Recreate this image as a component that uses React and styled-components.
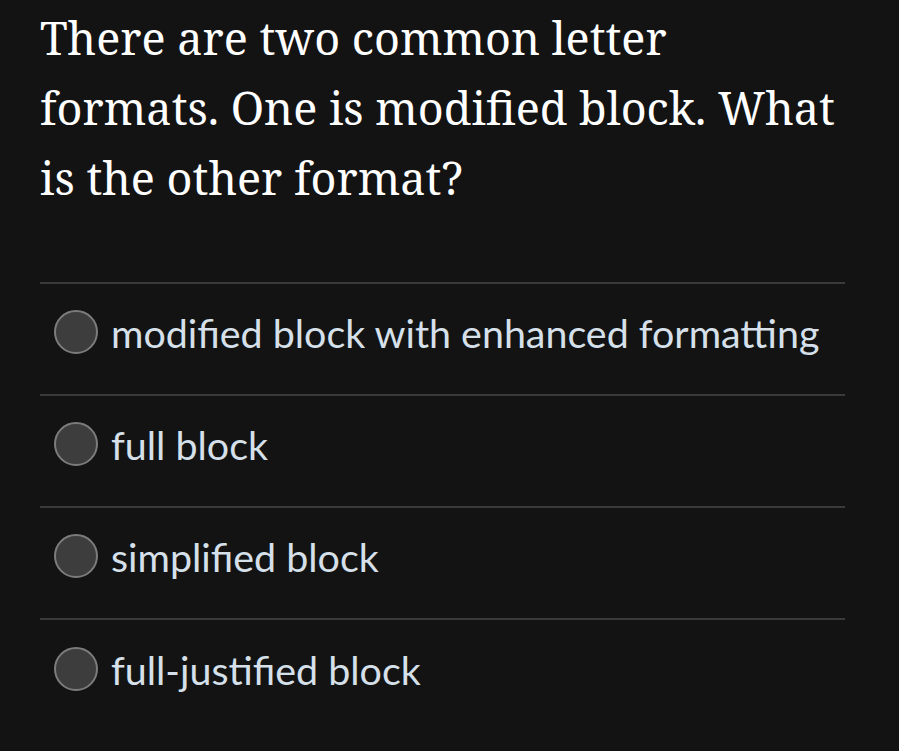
import styled, { createGlobalStyle } from 'styled-components';

const questionLines = [
  'There are two common letter',
  'formats. One is modified block. What',
  'is the other format?',
];

const options = [
  'modified block with enhanced formatting',
  'full block',
  'simplified block',
  'full-justified block',
];

function App() {
  return (
    <Page>
      <GlobalStyle />
      <Question>
        {questionLines.map((line) => (
          <Line key={line}>{line}</Line>
        ))}
      </Question>
      <Options>
        {options.map((text) => (
          <Option key={text}>
            <Radio type="radio" name="answer" />
            <Label>{text}</Label>
          </Option>
        ))}
      </Options>
    </Page>
  )
}

const GlobalStyle = createGlobalStyle`
  html, body {
    margin: 0;
    background: #131313;
  }
`
const Page = styled.div`
  width: 899px;
  min-height: 751px;
  box-sizing: border-box;
  padding: 3px 54px 0 40px;
  background: #131313;
`
const Question = styled.div`
  font-family: "Noto Serif", "DejaVu Serif", serif;
  font-size: 45px;
  line-height: 70px;
  color: #ffffff;
`
const Line = styled.div`
  white-space: nowrap;
`
const Options = styled.div`
  margin-top: 69px;
  border-top: 2px solid #3a3a3a;
`
const Option = styled.label`
  display: flex;
  align-items: center;
  gap: 13px;
  height: 112px;
  box-sizing: border-box;
  padding: 0 0 14px 14px;
  border-bottom: 2px solid #3a3a3a;

  &:last-child {
    border-bottom: none;
  }
`
const Radio = styled.input`
  appearance: none;
  margin: 0;
  width: 44px;
  height: 44px;
  border-radius: 50%;
  background: #3d3d3d;
  border: 2.5px solid #7c7c7c;
  box-sizing: border-box;
`
const Label = styled.span`
  font-family: Lato, "Noto Sans", sans-serif;
  font-size: 39.4px;
  color: #d6e0ea;
`

export default App
